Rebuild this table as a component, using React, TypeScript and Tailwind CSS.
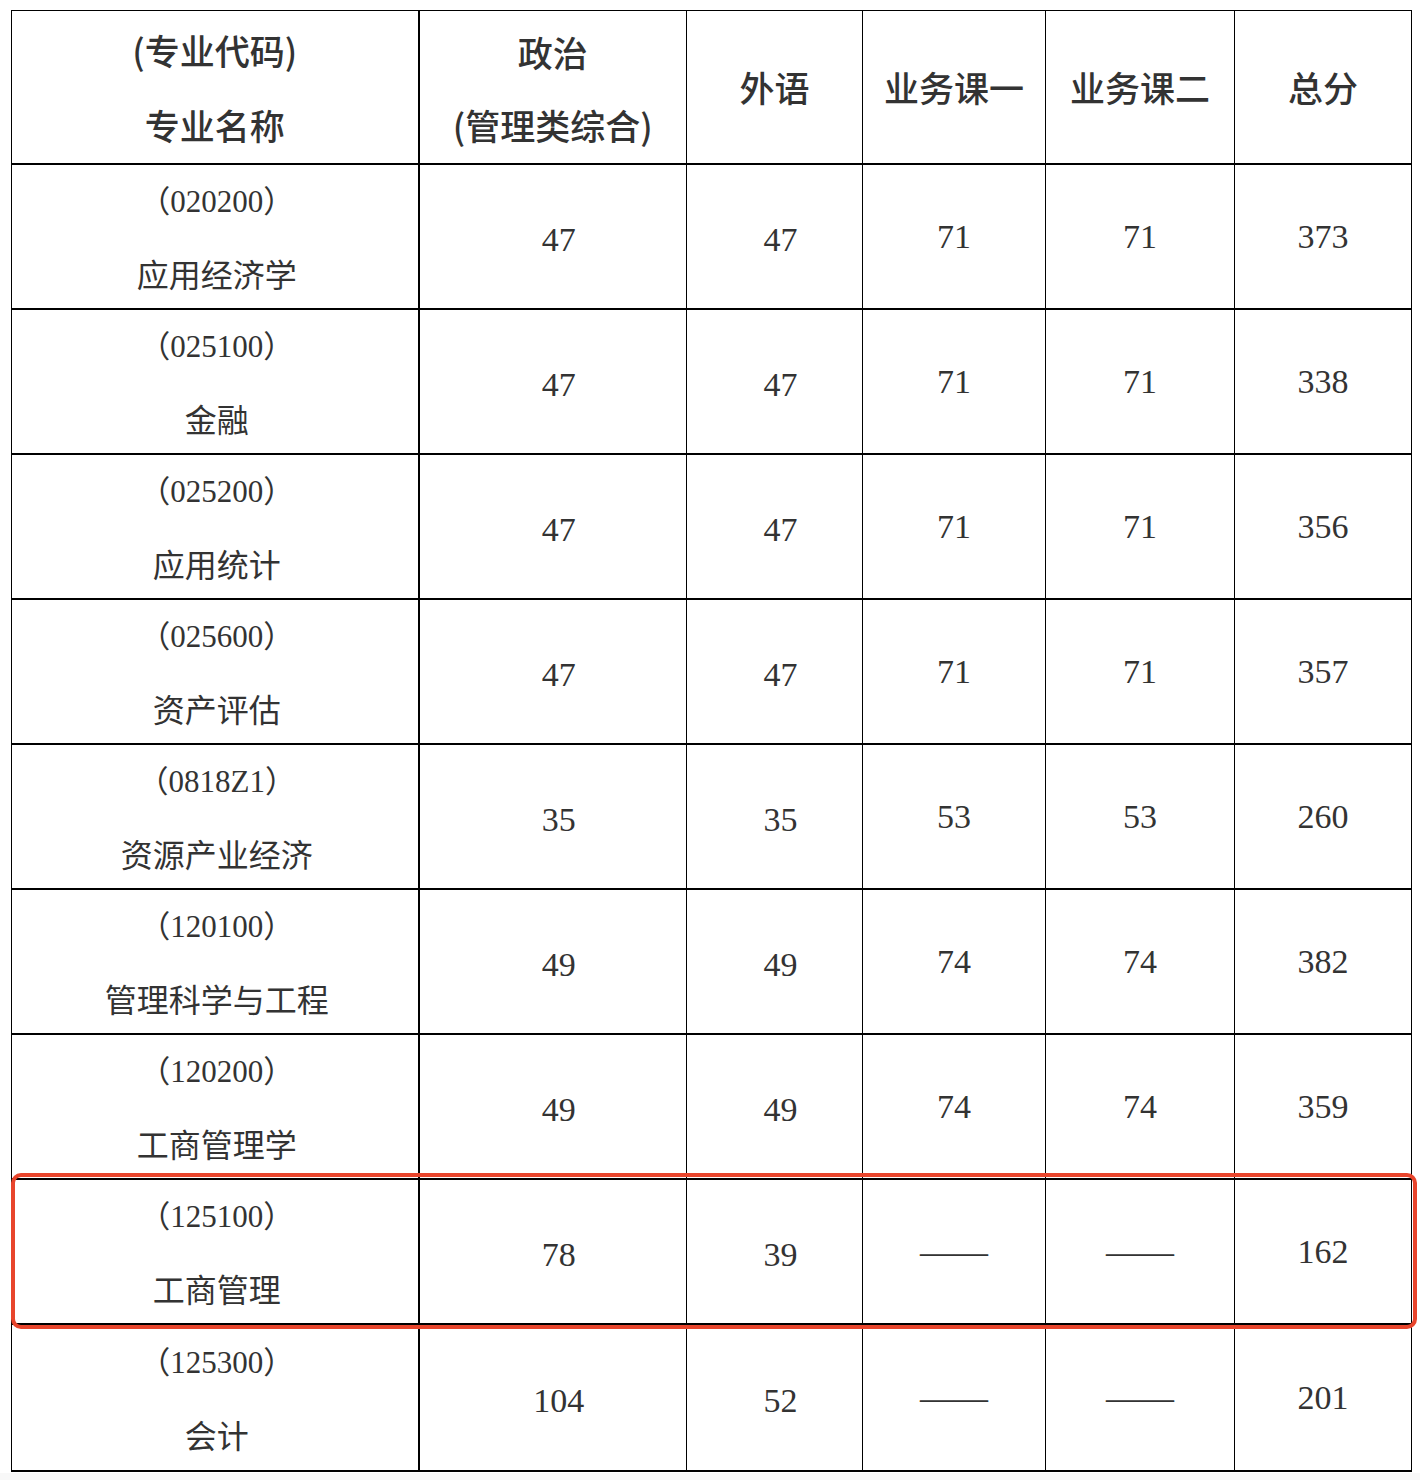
import React from 'react';

type Row = {
  code: string;
  name: string;
  politics: string;
  lang: string;
  c1: string;
  c2: string;
  total: string;
};

const ROWS: Row[] = [
  { code: '020200', name: '应用经济学', politics: '47', lang: '47', c1: '71', c2: '71', total: '373' },
  { code: '025100', name: '金融', politics: '47', lang: '47', c1: '71', c2: '71', total: '338' },
  { code: '025200', name: '应用统计', politics: '47', lang: '47', c1: '71', c2: '71', total: '356' },
  { code: '025600', name: '资产评估', politics: '47', lang: '47', c1: '71', c2: '71', total: '357' },
  { code: '0818Z1', name: '资源产业经济', politics: '35', lang: '35', c1: '53', c2: '53', total: '260' },
  { code: '120100', name: '管理科学与工程', politics: '49', lang: '49', c1: '74', c2: '74', total: '382' },
  { code: '120200', name: '工商管理学', politics: '49', lang: '49', c1: '74', c2: '74', total: '359' },
  { code: '125100', name: '工商管理', politics: '78', lang: '39', c1: '——', c2: '——', total: '162' },
  { code: '125300', name: '会计', politics: '104', lang: '52', c1: '——', c2: '——', total: '201' },
];

const serif = "font-['Liberation_Serif','Noto_Sans_CJK_SC',serif]";
const head = "font-['Noto_Sans_CJK_SC',sans-serif] font-medium text-[35px] text-[#333]";
const num = `border-x border-y-2 border-black p-0 text-center text-[34px] text-[#333] ${serif}`;

export default function App() {
  return (
    <div className="h-[1480px] bg-[#f8f8f8]">
      <div className="relative h-[1473px] bg-white pl-[11px] pt-[10px]">
        <table className="w-[1400px] table-fixed border-collapse">
          <colgroup>
            <col className="w-[407px]" />
            <col className="w-[268px]" />
            <col className="w-[176px]" />
            <col className="w-[183px]" />
            <col className="w-[189px]" />
            <col className="w-[177px]" />
          </colgroup>
          <thead>
            <tr className="h-[153px]">
              <th className={`border border-r-2 border-black p-0 text-center ${head}`}>
                <div className="leading-[75px]">(专业代码)</div>
                <div className="leading-[75px]">专业名称</div>
              </th>
              <th className={`border border-black p-0 text-center ${head}`}>
                <div className="leading-[73px] pt-[2px]">政治</div>
                <div className="leading-[73px]">(管理类综合)</div>
              </th>
              <th className={`border border-black p-0 text-center ${head}`}>外语</th>
              <th className={`border border-black p-0 text-center ${head}`}>业务课一</th>
              <th className={`border border-black p-0 text-center ${head}`}>业务课二</th>
              <th className={`border border-black p-0 text-center ${head}`}>总分</th>
            </tr>
          </thead>
          <tbody>
            {ROWS.map((r, i) => (
              <tr key={r.code} className={i === ROWS.length - 1 ? 'h-[147px]' : 'h-[145px]'}>
                <td className={`border-x border-r-2 border-y-2 border-black p-0 pl-1 text-center text-[31px] text-[#333] ${serif}`}>
                  <div className="h-[74px] leading-[74px]">（{r.code}）</div>
                  <div className="h-[69px] leading-[69px] text-[32px] font-['Noto_Sans_CJK_SC',sans-serif]">{r.name}</div>
                </td>
                <td className={`${num} pl-3 pt-[6px]`}>{r.politics}</td>
                <td className={`${num} pl-3 pt-[6px]`}>{r.lang}</td>
                <td className={num}>{r.c1}</td>
                <td className={num}>{r.c2}</td>
                <td className={num}>{r.total}</td>
              </tr>
            ))}
          </tbody>
        </table>
        {/* highlight around 工商管理 row */}
        <div className="pointer-events-none absolute left-[11px] top-[1173px] h-[156px] w-[1406px] rounded-[10px] border-4 border-[#e8452c]" />
      </div>
    </div>
  );
}
